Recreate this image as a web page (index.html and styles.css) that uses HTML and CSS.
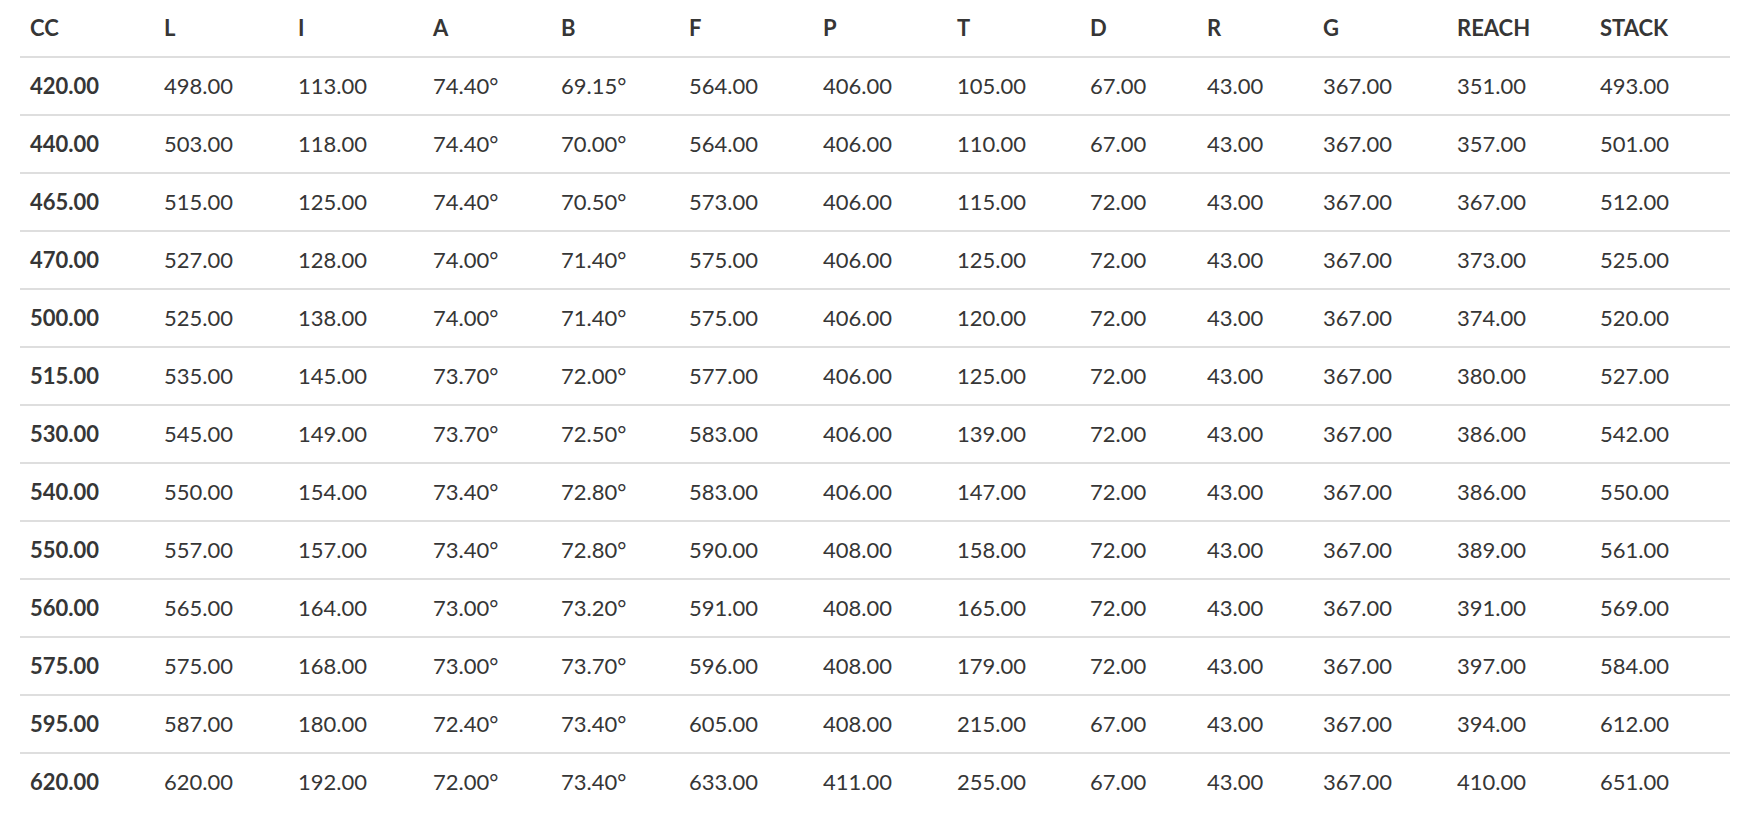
FILE: index.html
```html
<!DOCTYPE html>
<html lang="en">
<head>
<meta charset="utf-8">
<title>Geometry</title>
<link rel="stylesheet" href="styles.css">
</head>
<body>
<div class="wrap">
<table class="geo">
<colgroup>
<col class="c1"><col class="c2"><col class="c3"><col class="c4"><col class="c5"><col class="c6"><col class="c7"><col class="c8"><col class="c9"><col class="c10"><col class="c11"><col class="c12"><col class="c13">
</colgroup>
<thead>
<tr><th>CC</th><th>L</th><th>I</th><th>A</th><th>B</th><th>F</th><th>P</th><th>T</th><th>D</th><th>R</th><th>G</th><th>REACH</th><th>STACK</th></tr>
</thead>
<tbody>
<tr><th>420.00</th><td>498.00</td><td>113.00</td><td>74.40°</td><td>69.15°</td><td>564.00</td><td>406.00</td><td>105.00</td><td>67.00</td><td>43.00</td><td>367.00</td><td>351.00</td><td>493.00</td></tr>
<tr><th>440.00</th><td>503.00</td><td>118.00</td><td>74.40°</td><td>70.00°</td><td>564.00</td><td>406.00</td><td>110.00</td><td>67.00</td><td>43.00</td><td>367.00</td><td>357.00</td><td>501.00</td></tr>
<tr><th>465.00</th><td>515.00</td><td>125.00</td><td>74.40°</td><td>70.50°</td><td>573.00</td><td>406.00</td><td>115.00</td><td>72.00</td><td>43.00</td><td>367.00</td><td>367.00</td><td>512.00</td></tr>
<tr><th>470.00</th><td>527.00</td><td>128.00</td><td>74.00°</td><td>71.40°</td><td>575.00</td><td>406.00</td><td>125.00</td><td>72.00</td><td>43.00</td><td>367.00</td><td>373.00</td><td>525.00</td></tr>
<tr><th>500.00</th><td>525.00</td><td>138.00</td><td>74.00°</td><td>71.40°</td><td>575.00</td><td>406.00</td><td>120.00</td><td>72.00</td><td>43.00</td><td>367.00</td><td>374.00</td><td>520.00</td></tr>
<tr><th>515.00</th><td>535.00</td><td>145.00</td><td>73.70°</td><td>72.00°</td><td>577.00</td><td>406.00</td><td>125.00</td><td>72.00</td><td>43.00</td><td>367.00</td><td>380.00</td><td>527.00</td></tr>
<tr><th>530.00</th><td>545.00</td><td>149.00</td><td>73.70°</td><td>72.50°</td><td>583.00</td><td>406.00</td><td>139.00</td><td>72.00</td><td>43.00</td><td>367.00</td><td>386.00</td><td>542.00</td></tr>
<tr><th>540.00</th><td>550.00</td><td>154.00</td><td>73.40°</td><td>72.80°</td><td>583.00</td><td>406.00</td><td>147.00</td><td>72.00</td><td>43.00</td><td>367.00</td><td>386.00</td><td>550.00</td></tr>
<tr><th>550.00</th><td>557.00</td><td>157.00</td><td>73.40°</td><td>72.80°</td><td>590.00</td><td>408.00</td><td>158.00</td><td>72.00</td><td>43.00</td><td>367.00</td><td>389.00</td><td>561.00</td></tr>
<tr><th>560.00</th><td>565.00</td><td>164.00</td><td>73.00°</td><td>73.20°</td><td>591.00</td><td>408.00</td><td>165.00</td><td>72.00</td><td>43.00</td><td>367.00</td><td>391.00</td><td>569.00</td></tr>
<tr><th>575.00</th><td>575.00</td><td>168.00</td><td>73.00°</td><td>73.70°</td><td>596.00</td><td>408.00</td><td>179.00</td><td>72.00</td><td>43.00</td><td>367.00</td><td>397.00</td><td>584.00</td></tr>
<tr><th>595.00</th><td>587.00</td><td>180.00</td><td>72.40°</td><td>73.40°</td><td>605.00</td><td>408.00</td><td>215.00</td><td>67.00</td><td>43.00</td><td>367.00</td><td>394.00</td><td>612.00</td></tr>
<tr><th>620.00</th><td>620.00</td><td>192.00</td><td>72.00°</td><td>73.40°</td><td>633.00</td><td>411.00</td><td>255.00</td><td>67.00</td><td>43.00</td><td>367.00</td><td>410.00</td><td>651.00</td></tr>
</tbody>
</table>
</div>
</body>
</html>
```

FILE: styles.css
```css
html, body {
  margin: 0;
  padding: 0;
  background: #ffffff;
}

.wrap {
  padding: 0 28px 0 20px;
}

.geo {
  width: 1710px;
  table-layout: fixed;
  border-collapse: collapse;
  font-family: Lato, "Open Sans", sans-serif;
  font-size: 22px;
  color: #363636;
}

.c1 { width: 134px; }
.c2 { width: 134px; }
.c3 { width: 135px; }
.c4 { width: 128px; }
.c5 { width: 128px; }
.c6 { width: 134px; }
.c7 { width: 134px; }
.c8 { width: 133px; }
.c9 { width: 117px; }
.c10 { width: 116px; }
.c11 { width: 134px; }
.c12 { width: 143px; }
.c13 { width: 140px; }

.geo th,
.geo td {
  text-align: left;
  padding: 0 10px 2px 10px;
  white-space: nowrap;
  vertical-align: middle;
}

.geo th {
  font-weight: 700;
}

.geo td {
  font-weight: 400;
}

.geo thead tr {
  height: 57px;
  border-bottom: 2px solid #dedede;
}

.geo tbody tr {
  height: 58px;
  border-bottom: 2px solid #dedede;
}

.geo tbody tr:last-child {
  border-bottom: none;
}
```
